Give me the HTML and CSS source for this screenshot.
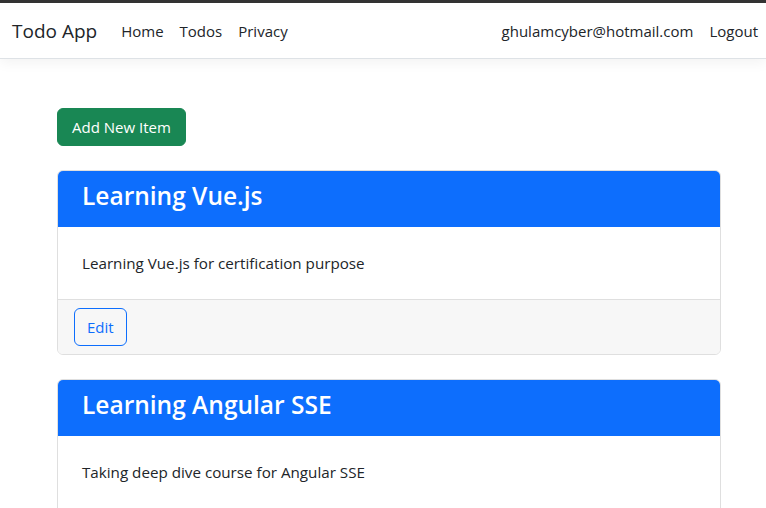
FILE: index.html
```html
<!DOCTYPE html>
<html>
<head>
    <title>Todo App</title>
    <link rel="stylesheet" href="styles.css">
</head>
<body>
    <header class="navbar">
        <div class="navbar-left">
            <a class="navbar-brand" href="#">Todo App</a>
            <nav class="nav-links">
                <a class="nav-link" href="#">Home</a>
                <a class="nav-link" href="#">Todos</a>
                <a class="nav-link" href="#">Privacy</a>
            </nav>
        </div>
        <div class="nav-links">
            <a class="nav-link" href="#">ghulamcyber@hotmail.com</a>
            <a class="nav-link" href="#">Logout</a>
        </div>
    </header>

    <main class="container">
        <button class="btn btn-success">Add New Item</button>

        <div class="card">
            <div class="card-header">
                <h2>Learning Vue.js</h2>
            </div>
            <div class="card-body">
                <p>Learning Vue.js for certification purpose</p>
            </div>
            <div class="card-footer">
                <button class="btn btn-outline-primary">Edit</button>
            </div>
        </div>

        <div class="card">
            <div class="card-header">
                <h2>Learning Angular SSE</h2>
            </div>
            <div class="card-body">
                <p>Taking deep dive course for Angular SSE</p>
            </div>
            <div class="card-footer">
                <button class="btn btn-outline-primary">Edit</button>
            </div>
        </div>
    </main>
</body>
</html>
```

FILE: styles.css
```css
body {
    margin: 0;
    font-family: "Open Sans", "Noto Sans", Arial, sans-serif;
    font-size: 16px;
    color: #212529;
    background-color: #fff;
    border-top: 3px solid #333;
}

a {
    color: #212529;
    text-decoration: none;
}

/* Navbar */
.navbar {
    display: flex;
    justify-content: space-between;
    align-items: center;
    height: 55px;
    padding: 0 0 0 12px;
    background-color: #fff;
    border-bottom: 1px solid #dee2e6;
    box-shadow: 0 4px 12px rgba(0,0,0,0.05);
}

.navbar-left {
    display: flex;
    align-items: center;
}

.navbar-brand {
    font-size: 19px;
    margin-right: 16px;
}

.nav-links {
    display: flex;
    align-items: center;
}

.nav-link {
    padding: 8px;
    font-size: 15px;
}

/* Content */
.container {
    padding: 49px 45px 0 57px;
}

.btn {
    font-family: inherit;
    font-size: 15px;
    line-height: 24px;
    padding: 6px 13px;
    border-radius: 6px;
    border: 1px solid transparent;
    cursor: pointer;
}

.btn-success {
    background-color: #198754;
    border-color: #198754;
    color: #fff;
    padding: 6px 14px;
}

.btn-outline-primary {
    background-color: transparent;
    border-color: #0d6efd;
    color: #0d6efd;
    padding: 6px 12px;
}

.card {
    margin-top: 24px;
    border: 1px solid #dfdfdf;
    border-radius: 6px;
    overflow: hidden;
}

.card-header {
    background-color: #0d6efd;
    color: #fff;
    padding: 8px 24px 14px;
}

.card-header h2 {
    margin: 0;
    font-size: 24.5px;
    font-weight: 600;
    line-height: 34px;
}

.card-body {
    padding: 24px;
}

.card-body p {
    margin: 0;
    font-size: 15.2px;
    line-height: 24px;
}

.card-footer {
    background-color: #f7f7f7;
    border-top: 1px solid #dfdfdf;
    padding: 8px 16px;
}
```
